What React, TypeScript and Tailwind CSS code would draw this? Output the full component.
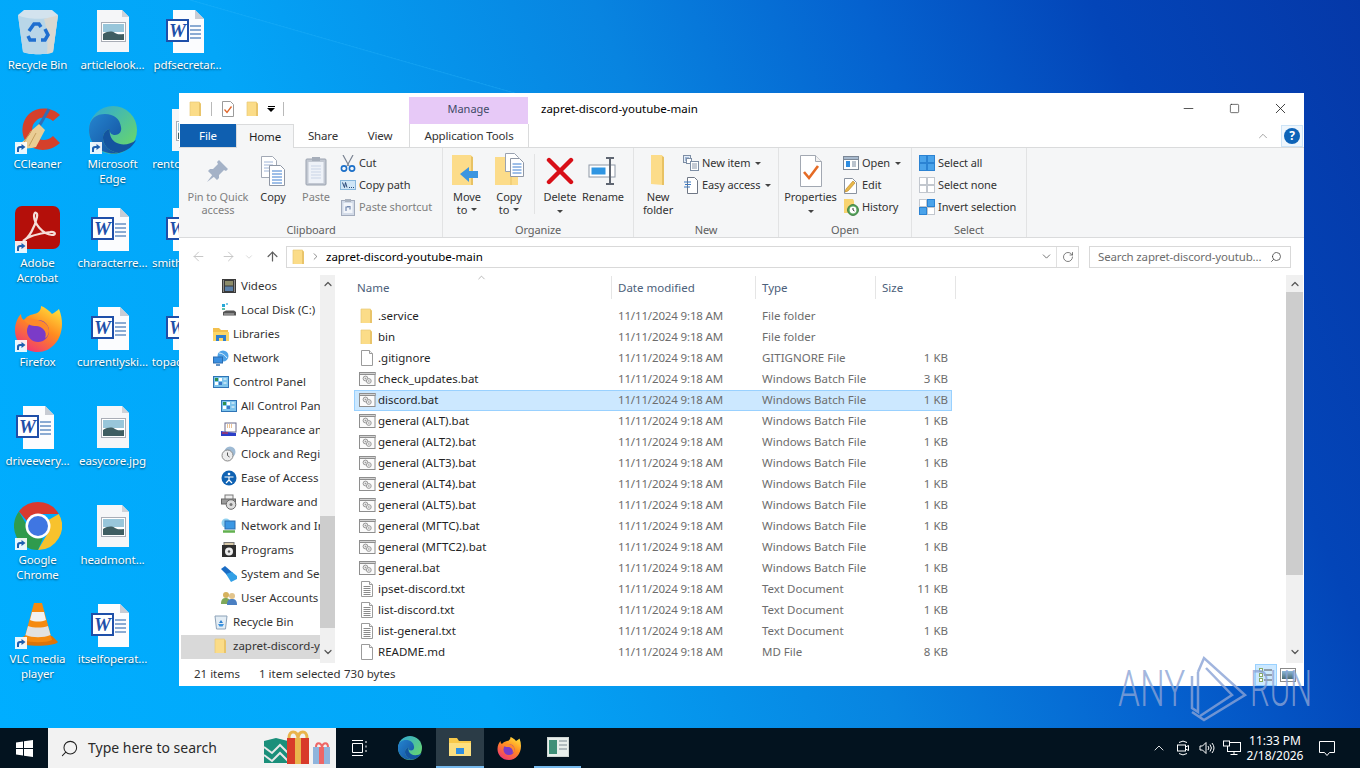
import type { ReactNode } from 'react';
import { ChevronDown, ChevronUp, ArrowLeft, ArrowRight, ArrowUp, RotateCw, Search, Minus, Square, X, ChevronRight } from 'lucide-react';

// ---------- small file icons ----------
function FolderSm() {
  return (
    <svg width="16" height="16" viewBox="0 0 16 16" className="shrink-0">
      <path d="M2 1h9.500l1.500 2v12H2z" fill="#fbdc88" />
      <path d="M11.500 1l1.500 2v12h-2V2z" fill="#e9c46a" />
      <path d="M2 1h9.500M2 1v14" stroke="#e8c877" strokeWidth="0.7" fill="none" />
    </svg>
  );
}

function BlankFile() {
  return (
    <svg width="16" height="16" viewBox="0 0 16 16" className="shrink-0">
      <path d="M2.500.500h8l3 3v12h-11z" fill="#fff" stroke="#9b9b9b" />
      <path d="M10.500.500v3h3" fill="#f2f2f2" stroke="#9b9b9b" />
    </svg>
  );
}

function TextFile() {
  return (
    <svg width="16" height="16" viewBox="0 0 16 16" className="shrink-0">
      <path d="M2.500.500h8l3 3v12h-11z" fill="#fff" stroke="#9b9b9b" />
      <path d="M10.500.500v3h3" fill="#f2f2f2" stroke="#9b9b9b" />
      <path d="M4.500 5.500h7M4.500 7.500h7M4.500 9.500h7M4.500 11.500h7M4.500 13.500h7" stroke="#8a8a8a" />
    </svg>
  );
}

function BatFile() {
  return (
    <svg width="17" height="16" viewBox="0 0 17 16" className="shrink-0">
      <rect x="0.500" y="1.500" width="15.500" height="13" fill="#fbfbfb" stroke="#8e8e8e" />
      <rect x="0.500" y="1.500" width="15.500" height="2" fill="#d2d2d2" stroke="#8e8e8e" />
      <circle cx="6.500" cy="7.500" r="2.400" fill="#e6e6e6" stroke="#9a9a9a" />
      <circle cx="9.800" cy="10" r="2.400" fill="#eeeeee" stroke="#9a9a9a" />
      <circle cx="6.500" cy="7.500" r="0.800" fill="#9a9a9a" />
      <circle cx="9.800" cy="10" r="0.800" fill="#9a9a9a" />
    </svg>
  );
}

// ---------- nav pane icons ----------
function NavIcon({ kind }: { kind: string }) {
  switch (kind) {
    case 'videos':
      return (
        <svg width="16" height="16" viewBox="0 0 16 16">
          <rect x="1" y="1" width="14" height="14" fill="#3a3a3a" />
          <rect x="4" y="3" width="8" height="4.500" fill="#8c8c6a" />
          <rect x="4" y="8.500" width="8" height="4.500" fill="#5a7fa8" />
          <path d="M2 3h1M2 5h1M2 7h1M2 9h1M2 11h1M2 13h1M13 3h1M13 5h1M13 7h1M13 9h1M13 11h1M13 13h1" stroke="#ddd" />
        </svg>
      );
    case 'disk':
      return (
        <svg width="16" height="16" viewBox="0 0 16 16">
          <rect x="1" y="2" width="3" height="3" fill="#25a7d8" />
          <rect x="5" y="1" width="2" height="2" fill="#7fc8e6" />
          <rect x="1" y="6" width="3" height="2" fill="#60c0a8" />
          <path d="M2 10l3-1.500h8l2 1.500v3.500H2z" fill="#555" />
          <rect x="3" y="11.500" width="10" height="1" fill="#bbb" />
        </svg>
      );
    case 'libraries':
      return (
        <svg width="16" height="16" viewBox="0 0 16 16">
          <path d="M0 2h6l2 2h7v4H0z" fill="#f3c04d" />
          <rect x="0" y="6" width="16" height="9" fill="#fcd667" />
          <rect x="3" y="9" width="10" height="6" fill="#2f7fcf" />
          <rect x="6" y="12" width="4" height="3" fill="#fcd667" />
        </svg>
      );
    case 'network':
      return (
        <svg width="16" height="16" viewBox="0 0 16 16">
          <circle cx="10" cy="6" r="5.500" fill="#4ea3e8" />
          <path d="M6 3c3 0 6 2 8 5" stroke="#d8eefc" fill="none" />
          <rect x="0.500" y="7" width="9" height="6" fill="#3a8fe0" stroke="#2b6cb0" />
          <path d="M3 15h4" stroke="#2b6cb0" strokeWidth="1.500" />
        </svg>
      );
    case 'panel':
      return (
        <svg width="16" height="16" viewBox="0 0 16 16">
          <rect x="0.500" y="2.500" width="15" height="11" fill="#7ec4ec" stroke="#2f74b6" />
          <rect x="2" y="4" width="3" height="3" fill="#2f8f4e" />
          <rect x="6" y="4" width="3" height="3" fill="#fff" />
          <rect x="2" y="8" width="3" height="3" fill="#fff" />
          <rect x="6" y="8" width="3" height="3" fill="#3a78c8" />
          <path d="M10.500 5h3M10.500 9h3" stroke="#fff" />
        </svg>
      );
    case 'appearance':
      return (
        <svg width="16" height="16" viewBox="0 0 16 16">
          <rect x="4" y="1" width="11" height="9" fill="#fff" stroke="#6a6a8a" />
          <path d="M6 3h1M8 3h1M10 3h1M6 5h1M8 5h1M10 5h1" stroke="#d8862a" />
          <path d="M0 9l6 1 9 1v3H0z" fill="#2b3fc8" />
          <path d="M1 11h6" stroke="#e33" />
        </svg>
      );
    case 'clock':
      return (
        <svg width="16" height="16" viewBox="0 0 16 16">
          <circle cx="9" cy="6" r="5.500" fill="#9ebad4" />
          <circle cx="6.500" cy="9.500" r="5.500" fill="#ececec" stroke="#8a8a8a" />
          <path d="M6.500 6.500v3l2 1.500" stroke="#555" fill="none" />
        </svg>
      );
    case 'ease':
      return (
        <svg width="16" height="16" viewBox="0 0 16 16">
          <circle cx="8" cy="8" r="7.500" fill="#0f62b3" />
          <circle cx="8" cy="4" r="1.300" fill="#fff" />
          <path d="M3.500 7h9M8 7v3M8 10l-3 3M8 10l3 3" stroke="#fff" strokeWidth="1.200" fill="none" />
        </svg>
      );
    case 'hardware':
      return (
        <svg width="16" height="16" viewBox="0 0 16 16">
          <rect x="4" y="1" width="8" height="5" fill="#eee" stroke="#7a7a7a" />
          <rect x="0.500" y="5" width="14" height="5" fill="#9a9a9a" stroke="#666" />
          <circle cx="10" cy="10.500" r="4.800" fill="#ddd" stroke="#666" />
          <circle cx="10" cy="10.500" r="1.500" fill="#777" />
        </svg>
      );
    case 'netint':
      return (
        <svg width="16" height="16" viewBox="0 0 16 16">
          <circle cx="5" cy="5" r="4.500" fill="#8fd0ef" />
          <rect x="4" y="3" width="10" height="8" fill="#3a97e4" stroke="#2a6db0" />
          <path d="M2 13.500h12" stroke="#62b04f" strokeWidth="2.500" />
        </svg>
      );
    case 'programs':
      return (
        <svg width="16" height="16" viewBox="0 0 16 16">
          <rect x="3" y="0.500" width="10" height="4" fill="#d8c9a8" stroke="#777" />
          <rect x="1" y="3" width="14" height="12" fill="#2e2e2e" />
          <circle cx="8" cy="9.500" r="4" fill="#eee" />
          <circle cx="8" cy="9.500" r="1.200" fill="#555" />
        </svg>
      );
    case 'system':
      return (
        <svg width="16" height="16" viewBox="0 0 16 16">
          <path d="M0 3l4-3 8 7v4l-3 1z" fill="#1a6cc4" />
          <path d="M5 8l6-2 5 4v3l-6 3z" fill="#33a0e6" />
        </svg>
      );
    case 'users':
      return (
        <svg width="16" height="16" viewBox="0 0 16 16">
          <circle cx="5" cy="5" r="3" fill="#d6b25e" />
          <path d="M0 14c0-5 2-6 5-6s4 2 4 6z" fill="#7fa85a" />
          <circle cx="11" cy="6" r="3" fill="#e2c48c" />
          <path d="M6 15c0-5 2-6 5-6s5 1 5 6z" fill="#4a7fc2" />
        </svg>
      );
    case 'recycle':
      return (
        <svg width="16" height="16" viewBox="0 0 16 16">
          <path d="M2 2h12l-1.500 13h-9z" fill="#e3edf5" stroke="#8ca2b8" />
          <path d="M8 6l2 3H6z" fill="#2a7fd0" />
          <path d="M5 10l1.500 2.500h3L11 10z" fill="#3c93df" />
        </svg>
      );
    default:
      return <FolderSm />;
  }
}

// ---------- ribbon icons ----------
function BigFolder({ children }: { children?: ReactNode }) {
  return (
    <svg width="34" height="36" viewBox="0 0 34 36">
      <path d="M2 2h19l1 2v28H2z" fill="#fcdc8a" />
      <path d="M21 3l2 1v28h-2z" fill="#e8c264" />
      {children}
    </svg>
  );
}

function PinIcon() {
  return (
    <svg width="26" height="26" viewBox="0 0 26 26">
      <path d="M14 2l9 9-2 2-2-1-5 5 0 3-2 2-9-9 2-2 3 0 5-5-1-2z" fill="#a4b2c7" />
      <path d="M8 16l-6 8 8-6z" fill="#a4b2c7" />
    </svg>
  );
}

function CopyIcon() {
  return (
    <svg width="26" height="30" viewBox="0 0 26 30">
      <path d="M1.500.500h11l4 4v17h-15z" fill="#fff" stroke="#a2a9b5" />
      <path d="M4 6h9M4 9h9M4 12h9M4 15h9" stroke="#9fb5d8" />
      <path d="M9.500 9.500h11l4 4v16h-15z" fill="#fff" stroke="#8f97a5" />
      <path d="M12 15h10M12 18h10M12 21h10M12 24h10M12 27h10" stroke="#3f7fd0" />
    </svg>
  );
}

function PasteIcon() {
  return (
    <svg width="22" height="30" viewBox="0 0 22 30">
      <rect x="1" y="3" width="20" height="26" rx="1" fill="#c2c8d2" stroke="#9ba3b0" />
      <rect x="3.500" y="6" width="15" height="21" fill="#eef2f8" />
      <path d="M6 10h10M6 13h10M6 16h10M6 19h10M6 22h10" stroke="#c9d4e6" />
      <rect x="7" y="1" width="8" height="4" fill="#a6aeba" />
    </svg>
  );
}

function CutIcon() {
  return (
    <svg width="16" height="17" viewBox="0 0 16 17">
      <path d="M3 0l6 11M13 0L7 11" stroke="#7a8392" strokeWidth="1.200" />
      <circle cx="4" cy="13.500" r="2.600" fill="none" stroke="#1b6fc8" strokeWidth="1.600" />
      <circle cx="12" cy="13.500" r="2.600" fill="none" stroke="#1b6fc8" strokeWidth="1.600" />
    </svg>
  );
}

function CopyPathIcon() {
  return (
    <svg width="16" height="12" viewBox="0 0 16 12">
      <rect x="0.500" y="1.500" width="15" height="9" fill="#cfe6f7" stroke="#88b7dc" />
      <path d="M2.500 3.500l2 5 1-5 1.500 5M9 8.500h1M11 8.500h1M13 8.500h1" stroke="#2a4a7a" fill="none" />
    </svg>
  );
}

function PasteShortcutIcon() {
  return (
    <svg width="14" height="17" viewBox="0 0 14 17">
      <rect x="0.500" y="1.500" width="13" height="15" fill="#d3dbe8" stroke="#a2abbc" />
      <rect x="2.500" y="4" width="9" height="10" fill="#f2f5fa" />
      <path d="M5 12V8h3M6 7.500l3 0v3" stroke="#7389b0" fill="none" strokeWidth="1.200" />
      <rect x="4" y="0" width="6" height="3" fill="#aab2bf" />
    </svg>
  );
}

function MoveToIcon() {
  return (
    <BigFolder>
      <path d="M10 21l9-7v4h9v7h-9v4z" fill="#3c96e0" />
    </BigFolder>
  );
}

function CopyToIcon() {
  return (
    <svg width="30" height="36" viewBox="0 0 30 36">
      <path d="M1 4h22l1 2v26H1z" fill="#fcdc8a" />
      <path d="M16 6l2 0v26h-2z" fill="#e8c264" opacity="0.5" />
      <path d="M11.500.500h9l4 4v14h-13z" fill="#fff" stroke="#9aa2b0" />
      <path d="M16.500 5.500h9l4 4v14h-13z" fill="#fff" stroke="#8f97a5" />
      <path d="M18.500 11h9M18.500 14h9M18.500 17h9M18.500 20h9" stroke="#3f7fd0" />
    </svg>
  );
}

function DeleteIcon() {
  return (
    <svg width="28" height="28" viewBox="0 0 28 28">
      <path d="M3 3l22 22M25 3L3 25" stroke="#d80f17" strokeWidth="4.400" strokeLinecap="round" />
    </svg>
  );
}

function RenameIcon() {
  return (
    <svg width="30" height="28" viewBox="0 0 30 28">
      <rect x="1" y="8" width="26" height="12" fill="#fff" stroke="#8e97a6" />
      <rect x="3.500" y="10.500" width="14" height="7" fill="#2f95e2" />
      <path d="M22 2v24M18 1h8M18 27h8" stroke="#5f6672" strokeWidth="2" />
    </svg>
  );
}

function NewItemIcon() {
  return (
    <svg width="16" height="16" viewBox="0 0 16 16">
      <rect x="0.500" y="0.500" width="7" height="7" fill="#e5edf6" stroke="#7d8ea5" />
      <path d="M2 3h4M2 5h4" stroke="#5d83b8" />
      <rect x="3.500" y="3.500" width="5" height="5" fill="#fff" stroke="#7d8ea5" />
      <rect x="7.500" y="6.500" width="8" height="9" fill="#fff" stroke="#7d8ea5" />
      <path d="M9 9h5M9 11h5M9 13h5" stroke="#8a97aa" />
    </svg>
  );
}

function EasyAccessIcon() {
  return (
    <svg width="16" height="18" viewBox="0 0 16 18">
      <path d="M4.500 1.500h7l3 3v13h-10z" fill="#fff" stroke="#6f7785" />
      <path d="M1 6h7M2 8.500h6M1 11h6" stroke="#3d78c0" />
    </svg>
  );
}

function PropertiesIcon() {
  return (
    <svg width="24" height="34" viewBox="0 0 24 34">
      <path d="M1.500 1.500h15l6 6v25h-21z" fill="#fff" stroke="#a2a8b2" />
      <path d="M16.500 1.500v6h6" fill="#f1f1f1" stroke="#a2a8b2" />
      <path d="M5 18l5 6 9-12" stroke="#e56b25" strokeWidth="2.600" fill="none" />
    </svg>
  );
}

function OpenIcon() {
  return (
    <svg width="16" height="14" viewBox="0 0 16 14">
      <rect x="0.500" y="0.500" width="15" height="13" fill="#fff" stroke="#7b8796" />
      <rect x="0.500" y="0.500" width="15" height="3" fill="#a7b9cd" stroke="#7b8796" />
      <rect x="3" y="5" width="4" height="6" fill="#2f8de0" />
      <path d="M9 6h4M9 8h4M9 10h4" stroke="#76889c" />
    </svg>
  );
}

function EditIcon() {
  return (
    <svg width="15" height="17" viewBox="0 0 15 17">
      <path d="M1.500 1.500h8l4 4v11h-12z" fill="#fff" stroke="#8a93a0" />
      <path d="M2 15l1-3 7-8 2 2-7 8z" fill="#e8b84a" stroke="#b57f1f" strokeWidth="0.600" />
    </svg>
  );
}

function HistoryIcon() {
  return (
    <svg width="16" height="18" viewBox="0 0 16 18">
      <path d="M1 1h9l1 2v12H1z" fill="#f8d471" />
      <circle cx="10" cy="12" r="5.400" fill="#57a65d" stroke="#3a7c40" />
      <circle cx="10" cy="12" r="3.400" fill="#fff" />
      <path d="M10 10v2l1.500 1" stroke="#333" fill="none" />
    </svg>
  );
}

function SelectGrid({ fill }: { fill: string[] }) {
  const cells = [0, 1, 2, 3];
  return (
    <svg width="16" height="16" viewBox="0 0 16 16">
      {cells.map((i) => (
        <rect
          key={i}
          x={i % 2 === 0 ? 0.5 : 8.5}
          y={i < 2 ? 0.5 : 8.5}
          width="7"
          height="7"
          fill={fill[i]}
          stroke={fill[i] === '#fff' ? '#c2c7ce' : '#2b83d3'}
        />
      ))}
    </svg>
  );
}

// ---------- desktop icons ----------
function ShortcutBadge() {
  return (
    <span className="absolute left-[1px] bottom-0 w-[12px] h-[12px] bg-white/90 flex items-center justify-center">
      <svg width="10" height="10" viewBox="0 0 10 10">
        <path d="M1 9V5.500C1 4 2 3 4 3h1.500V1L9.500 4 5.500 7V5H4C3 5 3 6 3 9z" fill="#1d5fb0" />
      </svg>
    </span>
  );
}

function WordDoc() {
  return (
    <svg width="48" height="48" viewBox="0 0 48 48">
      <path d="M9 3h22l9 9v34H9z" fill="#fbfcfe" />
      <path d="M31 3l9 9h-9z" fill="#c8ccd4" />
      <path d="M26 19h11M26 23h11M26 27h11M26 31h11" stroke="#1d5ba8" strokeWidth="1.200" />
      <rect x="3" y="13" width="21" height="21" fill="#fff" stroke="#1e4fa9" strokeWidth="2" />
      <text x="13.500" y="29.500" fontFamily="Liberation Serif, serif" fontSize="19" fontWeight="700" fontStyle="italic" textAnchor="middle" fill="#1e4fa9">W</text>
    </svg>
  );
}

function ImageDoc() {
  return (
    <svg width="48" height="48" viewBox="0 0 48 48">
      <path d="M8 3h25l7 7v35H8z" fill="#f5f6f8" />
      <path d="M33 3l7 7h-7z" fill="#cfd2d8" />
      <rect x="12.500" y="15.500" width="24" height="19" fill="#fff" stroke="#a9adb6" />
      <rect x="14" y="17" width="21" height="8" fill="#98c6da" />
      <path d="M14 27c5-3 9-3 12-1s6 1 9 1v6H14z" fill="#3f5e62" />
    </svg>
  );
}

function RecycleBinBig() {
  return (
    <svg width="48" height="48" viewBox="0 0 48 48">
      <path d="M4 8l6-5h28l6 5-5 37c-6 3-24 3-30 0z" fill="#d3e3ee" />
      <path d="M4 8c8 5 32 5 40 0l-5 37c-6 3-24 3-30 0z" fill="#b9d6e8" />
      <path d="M30 12c3 10 4 22 3 35 2 0 4-1 6-2l5-37z" fill="#e7d8c7" opacity="0.7" />
      <g fill="none" stroke="#1f6fd0" strokeWidth="3.500">
        <path d="M15 24l5-7h5l2 3" />
        <path d="M31 22l3 6-3 5h-4" />
        <path d="M22 33h-6l-2-4" />
      </g>
    </svg>
  );
}

function CCleaner() {
  return (
    <svg width="48" height="48" viewBox="0 0 48 48">
      <path d="M46 9C38 1 24 0 15 8 6 17 7 31 14 38c8 8 22 8 32-1l-7-7c-5 5-13 5-17 1-5-5-5-12 0-16 5-5 12-4 17 0z" fill="#d5402b" />
      <path d="M35 3L24 22" stroke="#2f6fb8" strokeWidth="3" />
      <path d="M25 18l6 6-9 17c-6 2-14 2-21-1 6-2 14-9 17-16z" fill="#e9cd94" />
      <path d="M9 38l8-13M15 40l7-13" stroke="#c59f5f" />
    </svg>
  );
}

function EdgeBig() {
  return (
    <svg width="48" height="48" viewBox="0 0 48 48">
      <defs>
        <linearGradient id="edgeA" x1="0" y1="0" x2="1" y2="1">
          <stop offset="0" stopColor="#2ea7d8" />
          <stop offset="1" stopColor="#6fdc5f" />
        </linearGradient>
        <linearGradient id="edgeB" x1="0" y1="0" x2="1" y2="1">
          <stop offset="0" stopColor="#2585cf" />
          <stop offset="1" stopColor="#134f9d" />
        </linearGradient>
      </defs>
      <circle cx="24" cy="24" r="24" fill="url(#edgeA)" />
      <path d="M0 24C0 12 8 8 16 8c9 0 15 5 16 13 1 5-2 8-6 8-3 0-6-2-5-6-5 1-7 5-7 9 0 8 7 14 16 15C15 50 0 40 0 24z" fill="url(#edgeB)" />
      <path d="M21 23c-5 1-7 5-7 9 0 8 7 14 16 15 9-2 15-8 17-13-6 5-15 6-21 2-4-3-6-8-5-13z" fill="#14549f" />
    </svg>
  );
}

function AcrobatBig() {
  return (
    <svg width="48" height="48" viewBox="0 0 48 48">
      <rect x="1" y="1" width="45" height="43" rx="7" fill="#b40f0a" />
      <path d="M9 36c6-3 12-14 14-24 1-5-3-6-3-1 0 7 8 18 18 19 5 0 3-4-2-3-8 1-21 4-27 9z" fill="none" stroke="#f6ded8" strokeWidth="2.200" />
    </svg>
  );
}

function FirefoxBig() {
  return (
    <svg width="48" height="48" viewBox="0 0 48 48">
      <defs>
        <linearGradient id="ffA" x1="0.800" y1="0" x2="0.200" y2="1">
          <stop offset="0" stopColor="#ffdf3c" />
          <stop offset="0.450" stopColor="#ff8a1f" />
          <stop offset="1" stopColor="#f0307a" />
        </linearGradient>
      </defs>
      <path d="M24 48C10 48 1 38 1 26c0-7 3-13 6-16 0 3 1 5 3 6 3-4 6-5 10-6 6-1 7-5 7-8 3 1 8 4 11 8 5-3 7-5 7-5 2 5 3 10 3 15 0 16-11 28-24 28z" fill="url(#ffA)" />
      <ellipse cx="24" cy="27" rx="11" ry="11" fill="#7b3bc8" />
      <path d="M10 16c4-2 9-1 14 0 5 1 11 4 11 11 0 3-2 6-4 7 3-6-3-12-9-12-4 0-8-1-12-6z" fill="#ff8a2a" />
    </svg>
  );
}

function ChromeBig() {
  return (
    <svg width="48" height="48" viewBox="0 0 48 48">
      <path d="M24 0a24 24 0 0 1 20.800 12H24a12 12 0 0 0-11 7L4.900 9.400A24 24 0 0 1 24 0z" fill="#d93a2f" />
      <path d="M44.800 12A24 24 0 0 1 24 48l10.400-18A12 12 0 0 0 34.400 18z" fill="#f7c22d" />
      <path d="M24 48A24 24 0 0 1 4.900 9.400L15 27a12 12 0 0 0 14 9z" fill="#2f9b4d" />
      <circle cx="24" cy="24" r="12.500" fill="#fff" />
      <circle cx="24" cy="24" r="10" fill="#3f76e2" />
    </svg>
  );
}

function VlcBig() {
  return (
    <svg width="48" height="48" viewBox="0 0 48 48">
      <path d="M4 41l6-6h28l6 6c-4 5-36 5-40 0z" fill="#dd7408" />
      <path d="M20 2h8l10 37c-6 3-22 3-28 0z" fill="#f58a10" />
      <path d="M18 11h12l2 8c-5 2-11 2-16 0z" fill="#f2f2f2" />
      <path d="M14 25c6 2 14 2 20 0l2.500 9c-7 3-18 3-25 0z" fill="#e2e2e2" />
    </svg>
  );
}

type DeskItem = { label: string[]; icon: ReactNode; shortcut?: boolean };

const desktopItems: DeskItem[] = [
  { label: ['Recycle Bin'], icon: <RecycleBinBig /> },
  { label: ['CCleaner'], icon: <CCleaner />, shortcut: true },
  { label: ['Adobe', 'Acrobat'], icon: <AcrobatBig />, shortcut: true },
  { label: ['Firefox'], icon: <FirefoxBig />, shortcut: true },
  { label: ['driveevery...'], icon: <WordDoc /> },
  { label: ['Google', 'Chrome'], icon: <ChromeBig />, shortcut: true },
  { label: ['VLC media', 'player'], icon: <VlcBig />, shortcut: true },
  { label: ['articlelook...'], icon: <ImageDoc /> },
  { label: ['Microsoft', 'Edge'], icon: <EdgeBig />, shortcut: true },
  { label: ['characterre...'], icon: <WordDoc /> },
  { label: ['currentlyski...'], icon: <WordDoc /> },
  { label: ['easycore.jpg'], icon: <ImageDoc /> },
  { label: ['headmont...'], icon: <ImageDoc /> },
  { label: ['itselfoperat...'], icon: <WordDoc /> },
  { label: ['pdfsecretar...'], icon: <WordDoc /> },
  { label: ['rentochang...'], icon: <ImageDoc /> },
  { label: ['smithabove...'], icon: <WordDoc /> },
  { label: ['topacrossm...'], icon: <WordDoc /> },
];

function DesktopIcon({ item }: { item: DeskItem }) {
  return (
    <div className="w-[75px] h-[99px] pt-[7px] flex flex-col items-center">
      <div className="relative w-[48px] h-[48px]">
        {item.icon}
        {item.shortcut && <ShortcutBadge />}
      </div>
      <div className="mt-[2px] text-center text-white tracking-[-0.1px] leading-[15px] [text-shadow:0_1px_2px_rgba(0,0,0,0.6)] whitespace-nowrap">
        {item.label.map((l) => (
          <div key={l}>{l}</div>
        ))}
      </div>
    </div>
  );
}

// ---------- data ----------
const navItems = [
  { name: 'Videos', icon: 'videos', lvl: 2 },
  { name: 'Local Disk (C:)', icon: 'disk', lvl: 2 },
  { name: 'Libraries', icon: 'libraries', lvl: 1 },
  { name: 'Network', icon: 'network', lvl: 1 },
  { name: 'Control Panel', icon: 'panel', lvl: 1 },
  { name: 'All Control Panel Items', icon: 'panel', lvl: 2 },
  { name: 'Appearance and Personalization', icon: 'appearance', lvl: 2 },
  { name: 'Clock and Region', icon: 'clock', lvl: 2 },
  { name: 'Ease of Access', icon: 'ease', lvl: 2 },
  { name: 'Hardware and Sound', icon: 'hardware', lvl: 2 },
  { name: 'Network and Internet', icon: 'netint', lvl: 2 },
  { name: 'Programs', icon: 'programs', lvl: 2 },
  { name: 'System and Security', icon: 'system', lvl: 2 },
  { name: 'User Accounts', icon: 'users', lvl: 2 },
  { name: 'Recycle Bin', icon: 'recycle', lvl: 1 },
  { name: 'zapret-discord-youtube-main', icon: 'folder', lvl: 1, active: true },
];

const batType = 'Windows Batch File';
const files = [
  { name: '.service', type: 'File folder', size: '', kind: 'folder' },
  { name: 'bin', type: 'File folder', size: '', kind: 'folder' },
  { name: '.gitignore', type: 'GITIGNORE File', size: '1 KB', kind: 'blank' },
  { name: 'check_updates.bat', type: batType, size: '3 KB', kind: 'bat' },
  { name: 'discord.bat', type: batType, size: '1 KB', kind: 'bat', selected: true },
  { name: 'general (ALT).bat', type: batType, size: '1 KB', kind: 'bat' },
  { name: 'general (ALT2).bat', type: batType, size: '1 KB', kind: 'bat' },
  { name: 'general (ALT3).bat', type: batType, size: '1 KB', kind: 'bat' },
  { name: 'general (ALT4).bat', type: batType, size: '1 KB', kind: 'bat' },
  { name: 'general (ALT5).bat', type: batType, size: '1 KB', kind: 'bat' },
  { name: 'general (МГТС).bat', type: batType, size: '1 KB', kind: 'bat' },
  { name: 'general (МГТС2).bat', type: batType, size: '1 KB', kind: 'bat' },
  { name: 'general.bat', type: batType, size: '1 KB', kind: 'bat' },
  { name: 'ipset-discord.txt', type: 'Text Document', size: '11 KB', kind: 'text' },
  { name: 'list-discord.txt', type: 'Text Document', size: '1 KB', kind: 'text' },
  { name: 'list-general.txt', type: 'Text Document', size: '1 KB', kind: 'text' },
  { name: 'README.md', type: 'MD File', size: '8 KB', kind: 'blank' },
];

// ---------- ribbon helpers ----------
function Caret() {
  return <span className="inline-block w-0 h-0 border-x-[3px] border-x-transparent border-t-[3px] border-t-[#444] align-middle" />;
}

function BigButton({ w, icon, lines, caret, muted }: { w: string; icon: ReactNode; lines: string[]; caret?: boolean; muted?: boolean }) {
  return (
    <div className={`${w} flex flex-col items-center shrink-0 ${muted ? 'text-[#7f7f7f]' : 'text-[#333]'}`}>
      <div className="h-[38px] flex items-center justify-center">{icon}</div>
      <div className="text-center leading-[13px] whitespace-nowrap">
        {lines.map((l, i) => (
          <div key={l} className="flex items-center justify-center gap-1">
            {l}
            {caret && i === lines.length - 1 && <Caret />}
          </div>
        ))}
      </div>
    </div>
  );
}

function SmallRow({ icon, label, muted, caret }: { icon: ReactNode; label: string; muted?: boolean; caret?: boolean }) {
  return (
    <div className={`h-[22px] flex items-center whitespace-nowrap ${muted ? 'text-[#7f7f7f]' : 'text-[#333]'}`}>
      <span className="w-[17px] flex items-center justify-center shrink-0 mr-[3px]">{icon}</span>
      {label}
      {caret && (
        <span className="ml-[5px] flex">
          <Caret />
        </span>
      )}
    </div>
  );
}

function Group({ w, label, children }: { w: string; label: string; children: ReactNode }) {
  return (
    <div className={`${w} h-full shrink-0 flex flex-col border-r border-[#e2e3e4]`}>
      <div className="flex-1 flex pt-[4px]">{children}</div>
      <div className="h-[15px] text-center text-[#5f5f5f] leading-[15px]">{label}</div>
    </div>
  );
}

function FileRow({ f }: { f: (typeof files)[number] }) {
  return (
    <div className={`flex items-center h-[21px] w-[598px] border pb-[2px] ${f.selected ? 'bg-[#cce8ff] border-[#99d1ff]' : 'border-transparent'}`}>
      <div className="w-[256px] flex items-center text-[#1f1f1f] whitespace-nowrap pl-[4px]">
        <span className="w-[16px] mr-[3px] flex justify-center">
          {f.kind === 'folder' && <FolderSm />}
          {f.kind === 'blank' && <BlankFile />}
          {f.kind === 'text' && <TextFile />}
          {f.kind === 'bat' && <BatFile />}
        </span>
        {f.name}
      </div>
      <div className="w-[144px] pl-[7px] text-[#6d6d6d] tracking-[-0.15px]">11/11/2024 9:18 AM</div>
      <div className="w-[120px] pl-[7px] text-[#6d6d6d]">{f.type}</div>
      <div className="w-[75px] text-right text-[#6d6d6d] pr-[2px]">{f.size}</div>
    </div>
  );
}

// ---------- main ----------
export default function App() {
  return (
    <div className="relative w-[1360px] h-screen overflow-hidden flex flex-col text-[11.5px] font-['Noto_Sans',sans-serif] select-none">
      {/* Desktop */}
      <div className="relative flex-1 bg-[linear-gradient(67deg,#00aeff_0%,#03a6f8_30%,#0884e0_54%,#0562cf_70%,#0345b8_84%,#0538a8_100%)]">
        <div className="absolute left-[190px] top-0 w-[330px] h-[93px] bg-[linear-gradient(196deg,transparent_50%,#2bb7fb55_50.3%,transparent_51%)]" />
        <div className="grid grid-flow-col grid-cols-[repeat(3,75px)] grid-rows-[repeat(7,99px)] w-[225px]">
          {desktopItems.map((d) => (
            <DesktopIcon key={d.label[0]} item={d} />
          ))}
        </div>

        {/* Explorer window */}
        <div className="absolute left-[179px] top-[93px] w-[1125px] h-[593px] bg-white flex flex-col text-[#1f1f1f]">
          {/* Title row */}
          <div className="h-[31px] flex shrink-0">
            <div className="w-[230px] flex items-center pl-[9px]">
              <FolderSm />
              <span className="w-px h-[14px] bg-[#b9b9b9] ml-[7px] mr-[8px]" />
              <svg width="16" height="16" viewBox="0 0 16 16" className="mr-[6px]">
                <path d="M2.500.500h8l3 3v12h-11z" fill="#fff" stroke="#9b9b9b" />
                <path d="M4.500 8.500l2.500 3 4.500-6" stroke="#e0662a" strokeWidth="1.300" fill="none" />
              </svg>
              <span className="ml-[3px]"><FolderSm /></span>
              <span className="ml-[6px] flex flex-col items-center gap-[1px]">
                <span className="w-[7px] h-px bg-black" />
                <span className="w-0 h-0 border-x-[4px] border-x-transparent border-t-[4px] border-t-black" />
              </span>
              <span className="w-px h-[14px] bg-[#b9b9b9] ml-[8px]" />
            </div>
            <div className="w-[119px] mt-[4px] pb-[2px] bg-[#e7c9f7] flex items-center justify-center text-[11px] text-[#414a66]">Manage</div>
            <div className="pl-[13px] leading-[31px] text-black flex-1">zapret-discord-youtube-main</div>
            <div className="flex items-center text-[#222] mr-px">
              <span className="w-[46px] flex justify-center"><Minus size={15} strokeWidth={1.2} /></span>
              <span className="w-[46px] flex justify-center"><Square size={11} strokeWidth={1.4} /></span>
              <span className="w-[46px] flex justify-center"><X size={17} strokeWidth={1.2} /></span>
            </div>
          </div>

          {/* Tabs */}
          <div className="h-[24px] flex shrink-0 border-b border-[#dadbdc] tracking-[-0.15px]">
            <div className="w-[56px] ml-px h-[23px] bg-[#0f5fb0] text-white flex items-center justify-center">File</div>
            <div className="w-[58px] h-[24px] bg-[#f5f6f7] border-x border-t border-[#dadbdc] flex items-center justify-center">Home</div>
            <div className="w-[58px] flex items-center justify-center text-[#333]">Share</div>
            <div className="w-[56px] flex items-center justify-center text-[#333]">View</div>
            <div className="w-[120px] ml-px border-x border-[#dadbdc] flex items-center justify-center text-[#333]">Application Tools</div>
            <div className="flex-1 flex items-center justify-end">
              <ChevronUp size={14} strokeWidth={1.3} className="text-[#8a8a8a] mr-[11px]" />
              <span className="w-[22px] h-[22px] mr-[1px] border border-[#cde4f7] bg-[#eef6fd] flex items-center justify-center">
                <span className="w-[16px] h-[16px] rounded-full bg-[#0c63b8] text-white text-[12px] font-bold leading-[16px] text-center">?</span>
              </span>
            </div>
          </div>

          {/* Ribbon */}
          <div className="h-[90px] flex shrink-0 bg-[#f5f6f7] border-b border-[#dadbdc] pl-px text-[11px] tracking-[-0.1px]">
            <Group w="w-[263px]" label="Clipboard">
              <div className="w-[6px]" />
              <BigButton w="w-[64px]" icon={<PinIcon />} lines={['Pin to Quick', 'access']} muted />
              <BigButton w="w-[46px]" icon={<CopyIcon />} lines={['Copy']} />
              <BigButton w="w-[40px]" icon={<PasteIcon />} lines={['Paste']} muted />
              <div className="ml-[3px]">
                <SmallRow icon={<CutIcon />} label="Cut" />
                <SmallRow icon={<CopyPathIcon />} label="Copy path" />
                <SmallRow icon={<PasteShortcutIcon />} label="Paste shortcut" muted />
              </div>
            </Group>
            <Group w="w-[191px]" label="Organize">
              <div className="w-[4px]" />
              <BigButton w="w-[40px]" icon={<MoveToIcon />} lines={['Move', 'to']} caret />
              <BigButton w="w-[44px]" icon={<CopyToIcon />} lines={['Copy', 'to']} caret />
              <div className="w-[7px] flex justify-center"><span className="w-px h-[60px] mt-[2px] bg-[#e2e3e4]" /></div>
              <div className="w-[44px] flex flex-col items-center text-[#333] shrink-0">
                <div className="h-[38px] flex items-center"><DeleteIcon /></div>
                <div className="leading-[13px]">Delete</div>
                <div className="leading-[13px]"><Caret /></div>
              </div>
              <BigButton w="w-[42px]" icon={<RenameIcon />} lines={['Rename']} />
            </Group>
            <Group w="w-[145px]" label="New">
              <div className="w-[4px]" />
              <BigButton w="w-[40px]" icon={<svg width="26" height="36" viewBox="0 0 26 36"><path d="M6 2h11l1 2v28l-12-1z" fill="#fcdc8a" /><path d="M17 3l2 1v28h-2z" fill="#e8c264" /></svg>} lines={['New', 'folder']} />
              <div className="ml-[4px]">
                <SmallRow icon={<NewItemIcon />} label="New item" caret />
                <SmallRow icon={<EasyAccessIcon />} label="Easy access" caret />
              </div>
            </Group>
            <Group w="w-[133px]" label="Open">
              <div className="w-[4px]" />
              <div className="w-[55px] flex flex-col items-center text-[#333] shrink-0">
                <div className="h-[38px] flex items-center"><PropertiesIcon /></div>
                <div className="leading-[13px]">Properties</div>
                <div className="leading-[13px]"><Caret /></div>
              </div>
              <div className="ml-[4px]">
                <SmallRow icon={<OpenIcon />} label="Open" caret />
                <SmallRow icon={<EditIcon />} label="Edit" />
                <SmallRow icon={<HistoryIcon />} label="History" />
              </div>
            </Group>
            <Group w="w-[115px]" label="Select">
              <div className="ml-[6px]">
                <SmallRow icon={<SelectGrid fill={['#4aa3ea', '#4aa3ea', '#4aa3ea', '#4aa3ea']} />} label="Select all" />
                <SmallRow icon={<SelectGrid fill={['#fff', '#fff', '#fff', '#fff']} />} label="Select none" />
                <SmallRow icon={<SelectGrid fill={['#fff', '#4aa3ea', '#4aa3ea', '#fff']} />} label="Invert selection" />
              </div>
            </Group>
          </div>

          {/* Address bar */}
          <div className="h-[37px] flex items-center shrink-0">
            <div className="w-[107px] flex items-center pl-[12px] text-[#c4c4c4]">
              <ArrowLeft size={15} strokeWidth={1.5} />
              <ArrowRight size={15} strokeWidth={1.5} className="ml-[15px]" />
              <ChevronDown size={10} strokeWidth={1.5} className="ml-[8px]" />
              <ArrowUp size={15} strokeWidth={2} className="ml-[11px] text-[#5f5f5f]" />
            </div>
            <div className="w-[793px] h-[22px] border border-[#d9d9d9] flex items-center">
              <span className="ml-[4px]"><FolderSm /></span>
              <ChevronRight size={11} strokeWidth={1.5} className="ml-[3px] text-[#555]" />
              <span className="ml-[5px] text-black flex-1">zapret-discord-youtube-main</span>
              <ChevronDown size={13} strokeWidth={1.5} className="text-[#555] mr-[2px]" />
              <span className="w-px h-[20px] bg-[#e0e0e0] mx-[1px]" />
              <RotateCw size={12} strokeWidth={1.5} className="text-[#555] mx-[4px]" />
            </div>
            <div className="ml-[10px] w-[202px] h-[22px] border border-[#d9d9d9] flex items-center justify-between pl-[8px] pr-[8px] text-[#6d6d6d] whitespace-nowrap tracking-[-0.15px]">
              <span>Search zapret-discord-youtub...</span>
              <Search size={12} strokeWidth={1.6} className="text-[#444] -scale-x-100" />
            </div>
          </div>

          {/* Body */}
          <div className="flex-1 flex min-h-0">
            {/* Nav pane */}
            <div className="w-[141px] shrink-0 overflow-hidden">
              {navItems.map((n) => (
                <div key={n.name} className={`h-[24px] flex items-center whitespace-nowrap ml-[2px] pb-[2px] text-[#333] ${n.lvl === 2 ? 'pl-[40px]' : 'pl-[32px]'} ${n.active ? 'bg-[#d9d9d9]' : ''}`}>
                  <span className="w-[16px] h-[16px] mr-[4px] shrink-0 flex items-center justify-center"><NavIcon kind={n.icon} /></span>
                  {n.name}
                </div>
              ))}
            </div>
            <div className="w-[15px] shrink-0 bg-[#f0f0f0] flex flex-col items-center justify-between">
              <ChevronUp size={12} strokeWidth={2.4} className="text-[#555] mt-[3px]" />
              <div className="w-full h-[112px] bg-[#cdcdcd] mt-[225px] mb-[18px]" />
              <ChevronDown size={12} strokeWidth={2.4} className="text-[#555] mb-[5px]" />
            </div>

            {/* File list */}
            <div className="flex-1 min-w-0 relative pl-[19px] pt-px">
              <div className="flex h-[23px] w-[602px] text-[#4c607a] pb-[2px]">
                <div className="w-[258px] h-[23px] flex items-center pl-[3px] border-r border-[#e5e5e5] shrink-0">Name</div>
                <div className="w-[144px] h-[23px] flex items-center pl-[6px] border-r border-[#e5e5e5] shrink-0">Date modified</div>
                <div className="w-[120px] h-[23px] flex items-center pl-[6px] border-r border-[#e5e5e5] shrink-0">Type</div>
                <div className="w-[80px] h-[23px] flex items-center pl-[6px] border-r border-[#e5e5e5] shrink-0">Size</div>
              </div>
              <ChevronUp size={11} strokeWidth={1.3} className="absolute left-[141px] -top-[3px] text-[#8a8a8a]" />
              <div className="pt-[7px]">
                {files.map((f) => (
                  <FileRow key={f.name} f={f} />
                ))}
              </div>
            </div>
            <div className="w-[17px] shrink-0 bg-[#f0f0f0] flex flex-col items-center mr-px">
              <ChevronUp size={12} strokeWidth={2.4} className="text-[#555] mt-[3px]" />
              <div className="w-full h-[283px] bg-[#cdcdcd] mt-[2px]" />
              <div className="flex-1" />
              <ChevronDown size={12} strokeWidth={2.4} className="text-[#555] mb-[5px]" />
            </div>
          </div>

          {/* Status bar */}
          <div className="h-[23px] flex items-center shrink-0 text-[#333] pl-[15px] whitespace-nowrap">
            <span className="w-[65px] pb-[2px]">21 items</span>
            <span className="w-[85px] pb-[2px]">1 item selected</span>
            <span className="pb-[2px]">730 bytes</span>
            <div className="ml-auto flex items-center mr-[8px]">
              <span className="w-[22px] h-[22px] bg-[#cce8ff] border border-[#99d1ff] flex items-center justify-center">
                <svg width="14" height="14" viewBox="0 0 14 14">
                  <rect x="0.500" y="0.500" width="3" height="3" fill="#fff" stroke="#8a6" />
                  <rect x="0.500" y="5.500" width="3" height="3" fill="#fff" stroke="#8a6" />
                  <rect x="0.500" y="10.500" width="3" height="3" fill="#fff" stroke="#8a6" />
                  <path d="M5 2h8M5 7h8M5 12h8" stroke="#555" />
                </svg>
              </span>
              <span className="w-[16px] h-[14px] ml-[3px] border border-[#8a8a8a] bg-white flex items-center justify-center">
                <span className="w-[12px] h-[8px] bg-[linear-gradient(#8cb8d8,#4a6a70)]" />
              </span>
            </div>
          </div>
        </div>

        {/* Watermark */}
        <div className="absolute left-[1118px] top-[654px] flex items-center pointer-events-none text-[#8aa3d6]/80 font-['Roboto',sans-serif] font-light text-[50px] leading-[50px]">
          <span className="w-[62px] scale-x-[0.7] origin-left">ANY</span>
          <svg width="70" height="70" viewBox="0 0 70 70" className="shrink-0">
            <path d="M12 22V54L18 58V18M18 18L24 4L65 41L24 66L12 58M26 14L52 41L20 62" fill="none" stroke="currentColor" strokeWidth="2.500" />
          </svg>
          <span className="w-[62px] scale-x-[0.62] origin-left">RUN</span>
        </div>
      </div>

      {/* Taskbar */}
      <div className="h-[40px] shrink-0 bg-[#03131f] flex items-center relative">
        <div className="w-[48px] flex justify-center">
          <svg width="17" height="17" viewBox="0 0 17 17" fill="#fff">
            <path d="M0 2.500l7-1v6.500H0zM8 1.300L17 0v8H8zM0 9h7v6.500l-7-1zM8 9h9v8l-9-1.300z" />
          </svg>
        </div>
        <div className="w-[288px] h-full bg-[#f2f2f2] flex items-center pl-[12px] text-[#2b2b2b] text-[14px]">
          <Search size={19} strokeWidth={1.3} className="-scale-x-100 text-[#222]" />
          <span className="ml-[9px] pb-[2px]">Type here to search</span>
          <svg width="70" height="38" viewBox="0 0 70 38" className="ml-auto mr-[4px]">
            <path d="M2 12l12-3 12 3v22H2z" fill="#1b8f7a" />
            <path d="M2 18l8 6 8-8 8 8M2 26l8 6 8-8 8 8" stroke="#e8e8e8" strokeWidth="2" fill="none" />
            <rect x="25" y="9" width="22" height="26" fill="#d83a2a" />
            <rect x="33" y="9" width="6" height="26" fill="#e9b44c" />
            <path d="M27 9c0-8 8-8 9 0 1-8 9-8 9 0" stroke="#e9b44c" strokeWidth="3" fill="none" />
            <rect x="51" y="18" width="17" height="17" fill="#8fb4dc" />
            <rect x="57" y="18" width="5" height="17" fill="#e66" />
            <path d="M54 18c0-5 5-5 6 0 1-5 6-5 6 0" stroke="#e66" strokeWidth="2" fill="none" />
          </svg>
        </div>
        <div className="w-[48px] flex justify-center">
          <svg width="16" height="16" viewBox="0 0 16 16" fill="none" stroke="#fff">
            <path d="M0 .5h11M0 15.500h11M.5 3.500h10v9H.5zM14 1v2M14 5.500v2M14 10v2" />
          </svg>
        </div>
        <div className="w-[52px] flex justify-center">
          <svg width="24" height="24" viewBox="0 0 48 48"><EdgeBig /></svg>
        </div>
        <div className="w-[48px] h-full bg-[#2b3c47] border-b-[2px] border-[#76b9ed] flex items-center justify-center">
          <svg width="24" height="22" viewBox="0 0 24 22">
            <path d="M1 2h8l2 3h12v15H1z" fill="#f8c94a" />
            <rect x="1" y="7" width="22" height="13" fill="#fcdf80" />
            <rect x="8" y="12" width="8" height="6" fill="#2f8ee0" />
          </svg>
        </div>
        <div className="w-[50px] flex justify-center">
          <svg width="24" height="24" viewBox="0 0 48 48"><FirefoxBig /></svg>
        </div>
        <div className="w-[47px] h-full border-b-[2px] border-[#76b9ed] flex items-center justify-center">
          <svg width="22" height="20" viewBox="0 0 22 20">
            <rect x="0.500" y="0.500" width="21" height="19" fill="#e8efec" stroke="#cfd6d3" />
            <rect x="2" y="3" width="8" height="14" fill="#3f8f78" />
            <path d="M12 4h8M12 8h8M12 12h8" stroke="#7a8a92" />
          </svg>
        </div>

        {/* Tray */}
        <div className="ml-auto flex items-center text-white">
          <ChevronUp size={16} strokeWidth={1.3} className="mr-[8px]" />
          <svg width="16" height="16" viewBox="0 0 16 16" fill="none" stroke="#fff" className="mr-[8px]">
            <path d="M4 2.500a7 7 0 0 1 8 0M4 13.500a7 7 0 0 0 8 0" />
            <rect x="2.500" y="5" width="8" height="6" />
            <path d="M10.500 7l3-1.500v5l-3-1.500" />
          </svg>
          <svg width="16" height="16" viewBox="0 0 16 16" fill="none" stroke="#fff" className="mr-[8px]">
            <path d="M1 6h2.500L7 2.500v11L3.500 10H1zM9 6a3 3 0 0 1 0 4M11 4.500a5.500 5.500 0 0 1 0 7M13 3a8 8 0 0 1 0 10" />
          </svg>
          <svg width="18" height="16" viewBox="0 0 18 16" fill="none" stroke="#fff">
            <rect x="4.500" y="2.500" width="13" height="9" />
            <rect x="0.500" y="1" width="6" height="5" fill="#03131f" />
            <path d="M11 11.500v3M7.500 14.500h7" />
          </svg>
          <div className="w-[68px] text-center text-[12px] leading-[15px]">
            <div>11:33 PM</div>
            <div>2/18/2026</div>
          </div>
          <svg width="16" height="15" viewBox="0 0 16 15" fill="none" stroke="#fff" className="ml-[10px] mr-[25px]">
            <path d="M.5.500h15v11h-5l-2.500 3-2.500-3h-5z" />
          </svg>
        </div>
      </div>
    </div>
  );
}
